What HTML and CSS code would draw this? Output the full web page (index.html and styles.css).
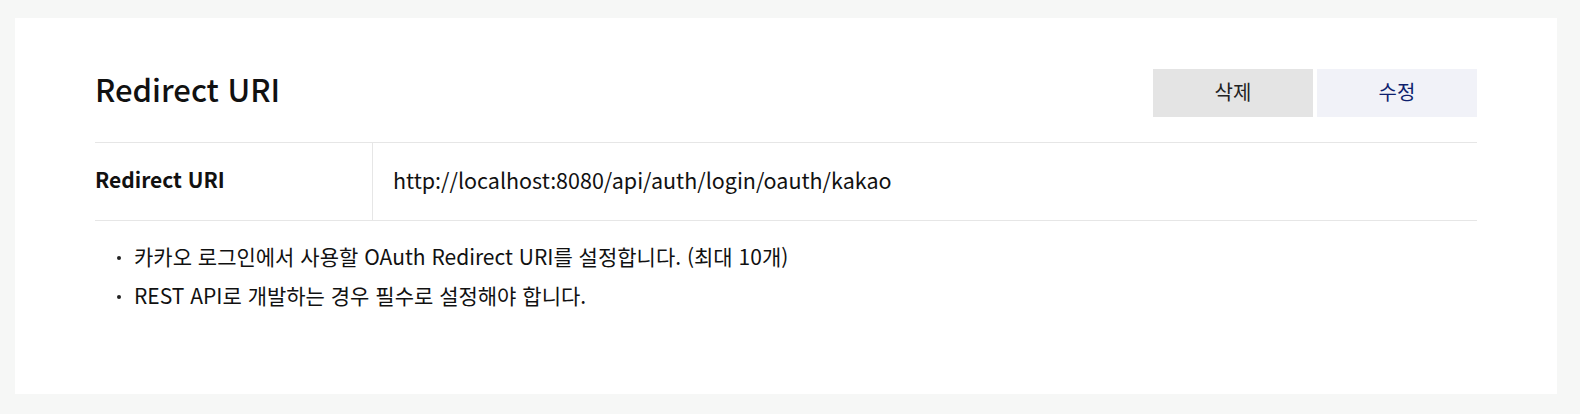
FILE: index.html
```html
<!DOCTYPE html>
<html lang="ko">
<head>
<meta charset="utf-8">
<title>Redirect URI</title>
<link rel="stylesheet" href="styles.css">
</head>
<body>
<div class="page">
  <section class="card">
    <header class="card-head">
      <h2 class="title">Redirect URI</h2>
      <div class="actions">
        <button class="btn btn-delete" type="button">삭제</button>
        <button class="btn btn-edit" type="button">수정</button>
      </div>
    </header>
    <div class="table">
      <div class="row">
        <div class="cell-label">Redirect URI</div>
        <div class="cell-value" lang="en">http://localhost:8080/api/auth/login/oauth/kakao</div>
      </div>
    </div>
    <ul class="notes">
      <li>카카오 로그인에서 사용할 OAuth Redirect URI를 설정합니다. (최대 10개)</li>
      <li>REST API로 개발하는 경우 필수로 설정해야 합니다.</li>
    </ul>
  </section>
</div>
</body>
</html>
```
FILE: styles.css
```css
* { box-sizing: border-box; }
html, body { margin: 0; padding: 0; }
body {
  background: #f6f7f6;
  font-family: "Noto Sans CJK KR", "Noto Sans", sans-serif;
  color: #1a1a1a;
}
.page {
  padding: 18px 23px 20px 15px;
}
.card {
  background: #fff;
  padding: 51px 80px 0 80px;
  height: 376px;
}
.card-head {
  display: flex;
  justify-content: space-between;
  align-items: center;
  margin-bottom: 25px;
}
.title {
  margin: 0 0 8px 0;
  font-size: 31px;
  font-weight: 500;
  color: #111;
  line-height: 40px;
}
.actions {
  display: flex;
  gap: 4px;
}
.btn {
  width: 160px;
  height: 48px;
  border: 0;
  font-family: inherit;
  font-size: 20px;
  padding: 0 0 3px 0;
  cursor: pointer;
}
.btn-delete { background: #e4e4e4; color: #222; }
.btn-edit { background: #f1f2f8; color: #0e1f6e; }
.table {
  border-top: 1px solid #e6e6e6;
  border-bottom: 1px solid #e6e6e6;
}
.row {
  display: flex;
  height: 77px;
}
.cell-label {
  width: 278px;
  border-right: 1px solid #e6e6e6;
  display: flex;
  align-items: center;
  padding-bottom: 5px;
  font-size: 21px;
  font-weight: 700;
  color: #111;
}
.cell-value {
  display: flex;
  align-items: center;
  padding-left: 20px;
  padding-bottom: 5px;
  font-size: 21.5px;
  color: #111;
}
.notes {
  list-style: none;
  margin: 0;
  padding: 20px 0 0 22px;
}
.notes li {
  position: relative;
  padding-left: 17px;
  font-size: 21px;
  line-height: 30px;
  margin-bottom: 9px;
  color: #111;
}
.notes li::before {
  content: "";
  position: absolute;
  left: 0;
  top: 15px;
  width: 4px;
  height: 4px;
  border-radius: 50%;
  background: #222;
}
```
